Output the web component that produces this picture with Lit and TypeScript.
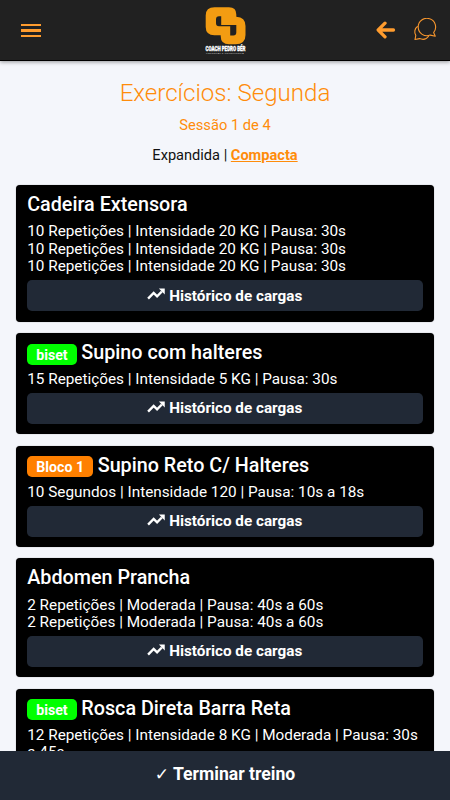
import { LitElement, html, css, svg } from "lit";
import { customElement, property } from "lit/decorators.js";

interface Exercise {
  name: string;
  tag?: string;
  tone?: string;
  sets: string[];
}

const EXERCISES: Exercise[] = [
  {
    name: "Cadeira Extensora",
    sets: Array(3).fill("10 Repetições | Intensidade 20 KG | Pausa: 30s"),
  },
  {
    name: "Supino com halteres",
    tag: "biset",
    tone: "green",
    sets: ["15 Repetições | Intensidade 5 KG | Pausa: 30s"],
  },
  {
    name: "Supino Reto C/ Halteres",
    tag: "Bloco 1",
    tone: "orange",
    sets: ["10 Segundos | Intensidade 120 | Pausa: 10s a 18s"],
  },
  {
    name: "Abdomen Prancha",
    sets: Array(2).fill("2 Repetições | Moderada | Pausa: 40s a 60s"),
  },
  {
    name: "Rosca Direta Barra Reta",
    tag: "biset",
    tone: "green",
    sets: ["12 Repetições | Intensidade 8 KG | Moderada | Pausa: 30s a 45s"],
  },
];

@customElement("exercise-card")
class ExerciseCard extends LitElement {
  @property({ attribute: false }) item!: Exercise;

  static styles = css`
    :host {
      display: block;
      box-sizing: border-box;
      padding: 7.2px 10.8px 10.5px 11px;
      border-radius: 4px;
      background: #000;
      color: #fff;
      box-shadow: 0 0 1px rgba(0, 0, 0, 0.5);
    }
    .title {
      display: flex;
      align-items: center;
      gap: 4.6px;
      height: 26px;
      margin: 0;
      font-size: 19.75px;
      line-height: 26px;
      font-weight: 500;
      white-space: nowrap;
    }
    .tag {
      box-sizing: border-box;
      height: 21px;
      margin-top: 2.6px;
      padding: 0 9px;
      border-radius: 5px;
      font-size: 14.2px;
      line-height: 22px;
      font-weight: 700;
    }
    .green { background: #00ff00; }
    .orange { background: #ff8000; }
    .sets {
      margin-top: 5.1px;
      font-size: 15.32px;
      line-height: 17.5px;
    }
    .history {
      display: flex;
      align-items: center;
      justify-content: center;
      gap: 3px;
      width: 100%;
      height: 30.7px;
      margin-top: 4.6px;
      padding: 0;
      border: 0;
      border-radius: 5px;
      background: #212936;
      color: #fff;
      font: 700 15.25px Roboto, sans-serif;
    }
    .trend { width: 20px; height: 20px; margin: -3px 0 0 -1.5px; }
  `;

  render() {
    const { name, tag, tone, sets } = this.item;
    return html`
      <h2 class="title">
        ${tag ? html`<span class="tag ${tone}">${tag}</span>` : ""}
        <span>${name}</span>
      </h2>
      <div class="sets">${sets.map((s) => html`<div>${s}</div>`)}</div>
      <button class="history">
        <svg class="trend" viewBox="0 0 24 24">
          <path d="M2.5 17.5 9.2 10.8 13.3 14.8 19 9" fill="none" stroke="#fff" stroke-width="2.9" />
          <path d="M15.5 5.5H22.5V12.5Z" fill="#fff" />
        </svg>
        <span>Histórico de cargas</span>
      </button>
    `;
  }
}

@customElement("app-root")
class AppRoot extends LitElement {
  static styles = css`
    :host {
      display: flex;
      flex-direction: column;
      width: 100%;
      height: 100vh;
      overflow: hidden;
      background: #f4f6fb;
      font-family: Roboto, sans-serif;
    }
    .bar {
      display: grid;
      grid-template-columns: 1fr 46px 1fr;
      align-items: center;
      flex: none;
      box-sizing: border-box;
      height: 61px;
      padding: 0 13px 0 21px;
      border-bottom: 1px solid #000;
      background: #212121;
      box-shadow: 0 1px 4px rgba(0, 0, 0, 0.4);
      z-index: 1;
    }
    .menu { display: flex; flex-direction: column; gap: 3px; width: 20px; margin-top: 1px; }
    .menu i { height: 2.5px; background: #ff9c2e; }
    .logo { width: 46px; height: 60px; margin-left: -4px; overflow: visible; }
    .brand { font: 900 6.6px Roboto, sans-serif; fill: #fff; stroke: #fff; stroke-width: 0.3; }
    .motto { font: 2.4px Roboto, sans-serif; fill: #aaa; }
    .actions { display: flex; justify-content: flex-end; align-items: center; gap: 17px; }
    .arrow { width: 20px; height: 20px; }
    .chat { width: 24px; height: 24px; }
    main { flex: 1; min-height: 0; overflow: hidden; text-align: center; }
    h1 {
      margin: 16px 0 0;
      font-size: 24.1px;
      line-height: 32px;
      font-weight: 300;
      color: #ff8c0a;
    }
    .session { margin-top: 7px; font-size: 14.7px; line-height: 18px; color: #ff8c0a; }
    .modes { margin-top: 11px; font-size: 14.6px; line-height: 20px; color: #111; }
    .current { font-weight: 700; color: #ff8c0a; text-decoration: underline; }
    .list {
      display: flex;
      flex-direction: column;
      gap: 11.2px;
      margin: 20px 16.5px 0 16.2px;
      text-align: left;
    }
    .finish {
      display: flex;
      align-items: center;
      justify-content: center;
      gap: 4px;
      flex: none;
      box-sizing: border-box;
      height: 49px;
      padding: 0 0 3px;
      border: 0;
      background: #212936;
      color: #fff;
      font: 700 17.6px/24px Roboto, sans-serif;
    }
    .check { font: 700 17px/24px "DejaVu Sans", sans-serif; }
  `;

  render() {
    return html`
      <header class="bar">
        <div class="menu"><i></i><i></i><i></i></div>
        <svg class="logo" viewBox="202 0 46 60">
          <path fill="#f39c12" d="M214.5 7.3H229Q236.3 7.3 236.3 14.5V16.8Q245.5 17.4 245.5 26V35Q245.5 44.3 235.5 44.3H229Q220.7 44.3 220.7 36V35.2H214.5Q205.7 35.2 205.7 27V15.5Q205.7 7.3 214.5 7.3Z" />
          <path fill="#212121" d="M219 16.3H221.2V24.9H236.3V32.5Q236.3 35.4 233.3 35.4H230.2V26.2H219Q216 26.2 216 23.2V19.3Q216 16.3 219 16.3Z" />
          ${svg`<text class="brand" x="205.5" y="50.9" textLength="40" lengthAdjust="spacingAndGlyphs">COACH PEDRO BÉR</text>
          <text class="motto" x="206" y="54" textLength="38" lengthAdjust="spacingAndGlyphs">PERSONAL &amp; CONSULTORIA</text>`}
        </svg>
        <div class="actions">
          <svg class="arrow" viewBox="0 0 20 20" fill="none" stroke="#ff9c2e" stroke-width="3.3" stroke-linecap="round" stroke-linejoin="round">
            <path d="M17.5 10H3M9 3.2 2.2 10 9 16.8" />
          </svg>
          <svg class="chat" viewBox="0 0 24 24" fill="none" stroke="#f7962d" stroke-width="1.1" stroke-linejoin="round">
            <path d="M20.6 14.6A8.7 8.7 0 1 0 17.2 17.1L22.3 18.2Z" />
            <path d="M4.7 8.3C1.5 10.5 1 14.5 2.8 17.4L2 21.5 6.5 20.6C10 22 13.6 21.2 15.8 18" />
          </svg>
        </div>
      </header>
      <main>
        <h1>Exercícios: Segunda</h1>
        <div class="session">Sessão 1 de 4</div>
        <div class="modes">Expandida | <span class="current">Compacta</span></div>
        <div class="list">
          ${EXERCISES.map((e) => html`<exercise-card .item=${e}></exercise-card>`)}
        </div>
      </main>
      <button class="finish"><span class="check">✓</span><span>Terminar treino</span></button>
    `;
  }
}
